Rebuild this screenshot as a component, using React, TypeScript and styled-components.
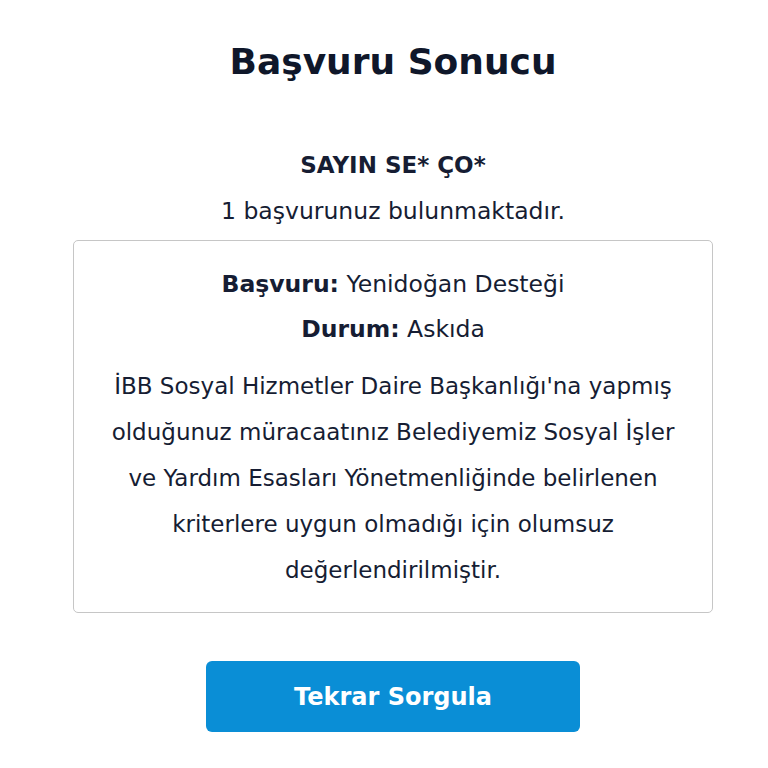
import styled, { createGlobalStyle } from "styled-components";

const GlobalStyle = createGlobalStyle`
  body {
    margin: 0;
    background: #ffffff;
    font-family: "DejaVu Sans", "Noto Sans", sans-serif;
    color: #161d33;
  }
`;

const Page = styled.main`
  display: flex;
  flex-direction: column;
  align-items: center;
  padding: 40px 0 0 18px;
`;

const Title = styled.h1`
  margin: 0;
  font-size: 36px;
  line-height: 44px;
  font-weight: 700;
  color: #0f172a;
`;

const Greeting = styled.h2`
  margin: 67px 0 0;
  font-size: 23px;
  line-height: 28px;
  font-weight: 700;
`;

const Count = styled.p`
  margin: 17px 0 0;
  font-size: 23.5px;
  line-height: 30px;
`;

const ResultCard = styled.section`
  box-sizing: border-box;
  width: 640px;
  margin-top: 14px;
  padding: 27px 30px 19px;
  border: 1px solid #c6c6c6;
  border-radius: 5px;
  text-align: center;
`;

const Field = styled.p`
  margin: 0 0 13px;
  font-size: 23.5px;
  line-height: 32px;

  strong {
    font-weight: 700;
  }
`;

const Message = styled.p`
  margin: 18px 0 0;
  font-size: 23px;
  line-height: 46px;
`;

const RetryButton = styled.button`
  margin-top: 48px;
  width: 374px;
  height: 71px;
  border: none;
  border-radius: 6px;
  background: #0a8ed6;
  color: #ffffff;
  font-family: inherit;
  font-size: 24px;
  font-weight: 700;
  cursor: pointer;
`;

export default function App() {
  return (
    <>
      <GlobalStyle />
      <Page>
        <Title>Başvuru Sonucu</Title>
        <Greeting>SAYIN SE* ÇO*</Greeting>
        <Count>1 başvurunuz bulunmaktadır.</Count>
        <ResultCard>
          <Field>
            <strong>Başvuru:</strong> Yenidoğan Desteği
          </Field>
          <Field>
            <strong>Durum:</strong> Askıda
          </Field>
          <Message>
            İBB Sosyal Hizmetler Daire Başkanlığı'na yapmış olduğunuz müracaatınız Belediyemiz
            Sosyal İşler ve Yardım Esasları Yönetmenliğinde belirlenen kriterlere uygun
            olmadığı için olumsuz değerlendirilmiştir.
          </Message>
        </ResultCard>
        <RetryButton type="button">Tekrar Sorgula</RetryButton>
      </Page>
    </>
  );
}
